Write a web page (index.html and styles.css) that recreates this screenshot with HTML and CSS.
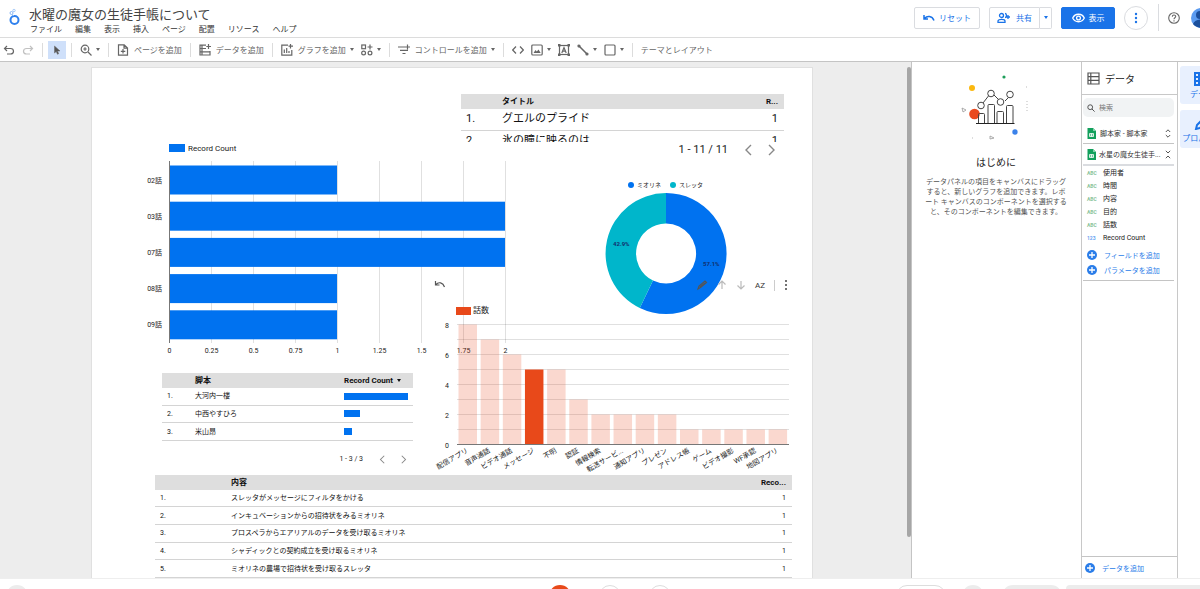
FILE: index.html
```html
<!DOCTYPE html>
<html lang="ja">
<head>
    <meta charset="UTF-8">
    <meta name="viewport" content="width=device-width, initial-scale=1.0">
    <title>水曜の魔女の生徒手帳について</title>
    <link rel="stylesheet" href="styles.css">
</head>
<body>

    <header class="header">
        <svg class="logo" viewBox="0 0 12 18" fill="none" stroke="#2f80ed">
            <circle cx="6.500" cy="12" r="4" stroke-width="2"/>
            <circle cx="3.500" cy="5" r="1.500" stroke="#8ab8f5"/>
            <circle cx="6" cy="2.500" r="1.200" stroke="#a9cbf8"/>
            <path d="M4.500 6.500 6 8" stroke="#8ab8f5"/>
        </svg>
        <div class="heading">
            <h1>水曜の魔女の生徒手帳について</h1>
            <nav class="menu">
                <button>ファイル</button>
                <button>編集</button>
                <button>表示</button>
                <button>挿入</button>
                <button>ページ</button>
                <button>配置</button>
                <button>リソース</button>
                <button>ヘルプ</button>
            </nav>
        </div>
        <div class="actions">
            <button class="btn reset">
                <svg width="12" height="12" viewBox="0 0 12 12" fill="none" stroke="currentColor" stroke-width="1.500"><path d="M1 3v4h4M1.500 6.500C4 3.500 9 3.500 11 8.500"/></svg>
                リセット
            </button>
            <div class="split">
                <button class="btn share">
                    <svg width="13" height="12" viewBox="0 0 13 12" fill="none" stroke="currentColor" stroke-width="1.300"><circle cx="4.500" cy="3.500" r="2"/><path d="M1 10.300V9c0-2.200 7-2.200 7 0v1.300zM8 1.500c2 0 2 4 0 4M11 3v4M9 5h4"/></svg>
                    共有
                </button>
                <button class="btn share-more" aria-label="共有オプション"><span class="caret"></span></button>
            </div>
            <button class="btn primary">
                <svg width="13" height="12" viewBox="0 0 13 12" fill="none" stroke="currentColor" stroke-width="1.300"><path d="M.7 6C3 1 10 1 12.300 6 10 11 3 11 .7 6z"/><circle cx="6.500" cy="6" r="1.900"/></svg>
                表示
            </button>
            <button class="round" aria-label="その他">
                <svg width="12" height="12" viewBox="0 0 12 12" fill="#1a73e8"><circle cx="6" cy="2" r="1.200"/><circle cx="6" cy="6" r="1.200"/><circle cx="6" cy="10" r="1.200"/></svg>
            </button>
            <span class="header-line"></span>
            <button class="help" aria-label="ヘルプ">
                <svg width="12" height="12" viewBox="0 0 12 12" fill="none" stroke="#666" stroke-width="1.100"><circle cx="6" cy="6" r="5.300"/><path d="M4.300 4.800c0-2.300 3.400-2.300 3.400-.2C7.700 5.800 6 5.800 6 7.200M6 8.300v1.200"/></svg>
            </button>
            <button class="avatar" aria-label="アカウント">
                <svg width="20" height="20" viewBox="0 0 20 20"><circle cx="10" cy="10" r="10" fill="#5b9bf0"/><circle cx="9" cy="7" r="4" fill="#1b4f9c"/><path d="M2 16c2-6 14-6 16 0-4 5-12 5-16 0z" fill="#1b4f9c"/></svg>
            </button>
        </div>
    </header>

    <div class="toolbar">
        <button class="tool" aria-label="元に戻す"><svg viewBox="0 0 12 12"><path d="M4 2 1.500 4.500 4 7M2 4.500h5.500c4 0 4 5.500 0 5.500H4"/></svg></button>
        <button class="tool" aria-label="やり直す" disabled><svg viewBox="0 0 12 12"><path d="M8 2l2.500 2.500L8 7M10 4.500H4.500c-4 0-4 5.500 0 5.500H8"/></svg></button>
        <span class="line"></span>
        <button class="tool selected" aria-label="選択"><svg viewBox="0 0 12 12"><path d="M3.500 2v7l1.700-1.500L6.500 10.300l1.200-.6L6.500 7H9z" fill="#555" stroke-width=".5"/></svg></button>
        <span class="line"></span>
        <button class="tool" aria-label="ズーム"><svg viewBox="0 0 12 12"><circle cx="5" cy="5" r="3.800"/><path d="M8 8l3.500 3.500M3.300 5h3.400M5 3.300v3.400"/></svg><span class="caret"></span></button>
        <span class="line"></span>
        <button class="tool"><svg viewBox="0 0 12 12"><path d="M1.500.8h5.700L10.500 4v7.200h-9zM7 1v3.200h3.500M6 5v4.500M3.800 7.300h4.500"/></svg>ページを追加</button>
        <span class="line"></span>
        <button class="tool"><svg viewBox="0 0 12 12"><path d="M7 1.200H1v9.800h10V7M1 4.500h6M1 7.800h10M9.500 0v5M7.300 2.500h4.700M3 1v10"/></svg>データを追加</button>
        <span class="line"></span>
        <button class="tool"><svg viewBox="0 0 12 12"><path d="M7 1.200H.8v10h10V6M3.300 9V5.500M5.700 9V4M8 9V7M9.500 0v4.500M7.500 2.200H12"/></svg>グラフを追加<span class="caret"></span></button>
        <button class="tool" aria-label="コミュニティ ビジュアリゼーション"><svg viewBox="0 0 12 12"><rect x=".8" y="1" width="3.700" height="3.700"/><circle cx="2.600" cy="9" r="1.900"/><circle cx="9" cy="9" r="1.900"/><path d="M9 .5v5M6.500 3h5"/></svg><span class="caret"></span></button>
        <span class="line"></span>
        <button class="tool"><svg viewBox="0 0 12 12"><path d="M0 3h7M2 6.300h8M4.500 9.500h3M9.500.5v5M7 3h5"/></svg>コントロールを追加<span class="caret"></span></button>
        <span class="line"></span>
        <button class="tool" aria-label="URL の埋め込み"><svg viewBox="0 0 12 12"><path d="M4 2.500.7 6 4 9.500M8 2.500 11.300 6 8 9.500"/></svg></button>
        <button class="tool" aria-label="画像"><svg viewBox="0 0 12 12"><rect x=".8" y="1" width="10.400" height="10" rx="1"/><path d="M2.500 9 4.500 6l1.300 1.500L7.500 5.500 9.700 9z" fill="#666" stroke="none"/></svg><span class="caret"></span></button>
        <button class="tool" aria-label="テキスト"><svg viewBox="0 0 12 12"><rect x="1.500" y="1.500" width="9" height="9"/><path d="M3.800 9 6 3.500 8.200 9M4.500 7.200h3"/><path d="M0 0h2.500v2.500H0zM9.500 0H12v2.500H9.500zM0 9.500h2.500V12H0zM9.500 9.500H12V12H9.500z" fill="#666" stroke="none"/></svg></button>
        <button class="tool" aria-label="線"><svg viewBox="0 0 12 12"><path d="M2 2l8 8" stroke-width="1.600"/><circle cx="2" cy="2" r="1" fill="#666"/><circle cx="10" cy="10" r="1" fill="#666"/></svg><span class="caret"></span></button>
        <button class="tool" aria-label="図形"><svg viewBox="0 0 12 12"><rect x="1" y="1" width="10" height="10" rx="1"/></svg><span class="caret"></span></button>
        <span class="line"></span>
        <button class="tool">テーマとレイアウト</button>
    </div>

    <div class="workspace">
        <main class="canvas">
            <div class="sheet">

                <section class="widget titles">
                    <div class="clip">
                        <table class="grid large">
                            <thead><tr><th class="num"></th><th>タイトル</th><th class="count">R...</th></tr></thead>
                            <tbody>
                                <tr><td>1.</td><td>グエルのプライド</td><td class="count">1</td></tr>
                                <tr><td>2.</td><td>氷の瞳に映るのは</td><td class="count">1</td></tr>
                            </tbody>
                        </table>
                    </div>
                    <div class="pager large">
                        <span>1 - 11 / 11</span>
                        <button aria-label="前へ"><svg viewBox="0 0 8 12"><path d="M7 1 2 6l5 5"/></svg></button>
                        <button aria-label="次へ"><svg viewBox="0 0 8 12"><path d="M1 1l5 5-5 5"/></svg></button>
                    </div>
                </section>

                <svg class="widget bars" id="barChart" width="375" height="220" viewBox="142 140 375 220"></svg>
                <svg class="widget donut" width="140" height="142" viewBox="596 176 140 142">
                    <circle cx="631" cy="185" r="3" fill="#0072f0"/>
                    <text x="637" y="187">ミオリネ</text>
                    <circle cx="673" cy="185" r="3" fill="#00b6cb"/>
                    <text x="679" y="187">スレッタ</text>
                    <path d="M666 193A60.500 60.500 0 1 1 639.800 308L653 280.500A30 30 0 1 0 666 223.500z" fill="#0072f0"/>
                    <path d="M666 193A60.500 60.500 0 0 0 639.800 308L653 280.500A30 30 0 0 1 666 223.500z" fill="#00b6cb"/>
                    <text x="613" y="246" class="share-label">42.9%</text>
                    <text x="703" y="266" class="share-label">57.1%</text>
                </svg>
                <svg class="widget columns" id="columnChart" width="364" height="172" viewBox="432 302 364 172"></svg>

                <button class="widget undo-chart" aria-label="元に戻す"><svg width="12" height="10" viewBox="0 0 12 10"><path d="M1.500 1v4h4M2 4.500c2.500-3 7-2 8.500 2.500"/></svg></button>
                <div class="widget chart-tools">
                    <button aria-label="編集"><svg width="12" height="12" viewBox="0 0 12 12"><path d="M2 10l1-3 6-5 1.500 1.500-6 5zM4 8l5-4"/></svg></button>
                    <button class="muted" aria-label="ドリルアップ"><svg width="10" height="12" viewBox="0 0 10 12"><path d="M5 10V2M1.500 5.500 5 2l3.500 3.500"/></svg></button>
                    <button class="muted" aria-label="ドリルダウン"><svg width="10" height="12" viewBox="0 0 10 12"><path d="M5 2v8M1.500 6.500 5 10l3.500-3.500"/></svg></button>
                    <button>AZ</button>
                    <span class="tools-line"></span>
                    <button aria-label="その他"><svg width="4" height="12" viewBox="0 0 4 12" fill="#444"><circle cx="2" cy="2" r="1"/><circle cx="2" cy="6" r="1"/><circle cx="2" cy="10" r="1"/></svg></button>
                </div>

                <section class="widget writers">
                    <table class="grid">
                        <thead><tr><th class="num"></th><th>脚本</th><th class="meter-col">Record Count <span class="caret"></span></th></tr></thead>
                        <tbody>
                            <tr><td>1.</td><td>大河内一楼</td><td><div class="meter" style="width: 100%"></div></td></tr>
                            <tr><td>2.</td><td>中西やすひろ</td><td><div class="meter" style="width: 25%"></div></td></tr>
                            <tr><td>3.</td><td>米山昂</td><td><div class="meter" style="width: 13%"></div></td></tr>
                        </tbody>
                    </table>
                    <div class="pager">
                        <span>1 - 3 / 3</span>
                        <button aria-label="前へ"><svg viewBox="0 0 8 12"><path d="M7 1 2 6l5 5"/></svg></button>
                        <button aria-label="次へ"><svg viewBox="0 0 8 12"><path d="M1 1l5 5-5 5"/></svg></button>
                    </div>
                </section>

                <section class="widget contents">
                    <table class="grid">
                        <thead><tr><th class="num"></th><th>内容</th><th class="count">Reco...</th></tr></thead>
                        <tbody>
                            <tr><td>1.</td><td>スレッタがメッセージにフィルタをかける</td><td class="count">1</td></tr>
                            <tr><td>2.</td><td>インキュベーションからの招待状をみるミオリネ</td><td class="count">1</td></tr>
                            <tr><td>3.</td><td>プロスペラからエアリアルのデータを受け取るミオリネ</td><td class="count">1</td></tr>
                            <tr><td>4.</td><td>シャディックとの契約成立を受け取るミオリネ</td><td class="count">1</td></tr>
                            <tr><td>5.</td><td>ミオリネの農場で招待状を受け取るスレッタ</td><td class="count">1</td></tr>
                        </tbody>
                    </table>
                </section>
            </div>
        </main>
        <div class="scroll"><div class="thumb"></div></div>

        <aside class="intro">
            <svg width="80" height="76" viewBox="0 0 80 76" fill="none" stroke="#444">
                <circle cx="48" cy="6" r="1.600" fill="#1e9e5a" stroke="none"/>
                <circle cx="16" cy="17" r="3" fill="#fbb80f" stroke="none"/>
                <circle cx="59" cy="61" r="2.700" fill="#3b82ea" stroke="none"/>
                <circle cx="18.500" cy="43" r="5.300" fill="#ea4a1f" stroke="none"/>
                <path d="M27 32l7-9M38 24l6 6M49 30l5-5"/>
                <g fill="#fff"><circle cx="25" cy="34.500" r="3.300"/><circle cx="35" cy="22.500" r="3.300"/><circle cx="44.500" cy="31" r="3.300"/><circle cx="54" cy="23.500" r="3.300"/></g>
                <path d="M22.500 52V43.500q0-1 1-1h4q1 0 1 1V52M32 52V34.500q0-1 1-1h4.500q1 0 1 1V52M41 52V41.500q0-1 1-1h4.500q1 0 1 1V52M50.500 52V35.500q0-1 1-1h4.500q1 0 1 1V52"/>
                <path d="M20 52.500h38.500" stroke="#222"/>
                <path d="M6 37l4 2-3 2zM34 65v3l4-1z" stroke="#999" stroke-width=".8"/>
                <path d="M71 30v10M70 16h1M16 67h1" stroke="#bbb" stroke-dasharray="1 2"/>
            </svg>
            <h2>はじめに</h2>
            <p>データパネルの項目をキャンバスにドラッグ<br>すると、新しいグラフを追加できます。レポ<br>ート キャンバスのコンポーネントを選択する<br>と、そのコンポーネントを編集できます。</p>
        </aside>

        <aside class="data">
            <h2 class="data-title">
                <svg width="13" height="13" viewBox="0 0 13 13" fill="none" stroke="#555" stroke-width="1.200"><path d="M1 1h11v11H1zM1 4.700h11M1 8.300h11M3.800 1v11"/></svg>
                データ
            </h2>
            <label class="search">
                <svg width="8" height="8" viewBox="0 0 8 8" fill="none" stroke="#555"><circle cx="3.200" cy="3.200" r="2.400"/><path d="M5 5l2.600 2.600"/></svg>
                <input type="search" placeholder="検索" aria-label="検索">
            </label>
            <button class="source">
                <svg width="9" height="11" viewBox="0 0 9 11"><path d="M.5 0h5.500L9 3v8H.5z" fill="#12a05c"/><path d="M6 0v3h3z" fill="#7fd0a8"/><path d="M2.500 5.500h4v3h-4zM4.500 5.500v3M2.500 7h4" fill="none" stroke="#fff" stroke-width=".8"/></svg>
                <span>脚本家 - 脚本家</span>
                <svg width="6" height="9" viewBox="0 0 6 9" fill="none" stroke="#555"><path d="M.8 3 3 .8 5.200 3M.8 6 3 8.200 5.200 6"/></svg>
            </button>
            <button class="source open">
                <svg width="9" height="11" viewBox="0 0 9 11"><path d="M.5 0h5.500L9 3v8H.5z" fill="#12a05c"/><path d="M6 0v3h3z" fill="#7fd0a8"/><path d="M2.500 5.500h4v3h-4zM4.500 5.500v3M2.500 7h4" fill="none" stroke="#fff" stroke-width=".8"/></svg>
                <span>水星の魔女生徒手...</span>
                <svg width="6" height="9" viewBox="0 0 6 9" fill="none" stroke="#555"><path d="M.8.800 3 3 5.200.8M.8 8.200 3 6l2.200 2.200"/></svg>
            </button>
            <ul class="fields">
                <li><b>ABC</b>使用者</li>
                <li><b>ABC</b>時間</li>
                <li><b>ABC</b>内容</li>
                <li><b>ABC</b>目的</li>
                <li><b>ABC</b>話数</li>
                <li class="metric"><b>123</b>Record Count</li>
            </ul>
            <div class="adders">
                <button class="add"><svg width="10" height="10" viewBox="0 0 10 10"><circle cx="5" cy="5" r="5" fill="#2a7de9"/><path d="M5 2v6M2 5h6" stroke="#fff" stroke-width="1.300"/></svg>フィールドを追加</button>
                <button class="add"><svg width="10" height="10" viewBox="0 0 10 10"><circle cx="5" cy="5" r="5" fill="#2a7de9"/><path d="M5 2v6M2 5h6" stroke="#fff" stroke-width="1.300"/></svg>パラメータを追加</button>
            </div>
            <div class="data-bottom">
                <button class="add"><svg width="10" height="10" viewBox="0 0 10 10"><circle cx="5" cy="5" r="5" fill="#2a7de9"/><path d="M5 2v6M2 5h6" stroke="#fff" stroke-width="1.300"/></svg>データを追加</button>
            </div>
        </aside>

        <nav class="rail">
            <button><svg width="16" height="14" viewBox="0 0 16 14"><path d="M1 1h14v12H1zM1 5h14M1 9h14M5 1v12"/></svg>データ</button>
            <button><svg width="16" height="14" viewBox="0 0 16 14"><path d="M2 13l1-4 8-8 3 3-8 8z"/></svg>プロパティ</button>
        </nav>
    </div>

    <footer class="dock">
        <div class="dock-left"><i class="disc"></i></div>
        <div class="dock-center"><i class="disc hot"></i><i class="disc ring"></i><i class="disc ring"></i></div>
        <div class="dock-right"><i class="disc pill"></i><i class="disc"></i><i class="disc wide"></i><i class="disc rest"></i></div>
    </footer>

    <script>
        const SVG = "http://www.w3.org/2000/svg";

        function add(parent, tag, attrs, text) {
            const el = document.createElementNS(SVG, tag);
            for (const key in attrs) el.setAttribute(key, attrs[key]);
            if (text !== undefined) el.textContent = text;
            parent.appendChild(el);
        }

        // Record Count per episode
        const episodes = [["02話", 1], ["03話", 2], ["07話", 2], ["08話", 1], ["09話", 1]];

        function drawBars() {
            const svg = document.getElementById("barChart");
            const unit = 168;
            add(svg, "rect", { x: 169, y: 144, width: 16, height: 8, fill: "#0072f0" });
            add(svg, "text", { x: 188, y: 151, class: "legend" }, "Record Count");
            for (let i = 0; i <= 8; i++) {
                const x = 169.5 + i * unit / 4;
                add(svg, "line", { x1: x, x2: x, y1: 161, y2: 343, class: i ? "guide" : "axis" });
                add(svg, "text", { x: x, y: 353, class: "middle" }, i / 4);
            }
            episodes.forEach(([name, count], i) => {
                const y = 165.5 + i * 36.2;
                add(svg, "rect", { x: 170, y: y, width: count * unit - 1, height: 29, fill: "#0072f0" });
                add(svg, "text", { x: 162, y: y + 17, class: "end" }, name);
            });
        }

        // 話数 per kind of scene
        const kinds = [
            ["配信アプリ", 8], ["音声通話", 7], ["ビデオ通話", 6], ["メッセージ", 5], ["不明", 5],
            ["認証", 3], ["情報検索", 2], ["転送サービ...", 2], ["通知アプリ", 2], ["プレゼン", 2],
            ["アドレス帳", 1], ["ゲーム", 1], ["ビデオ撮影", 1], ["WF承認", 1], ["地図アプリ", 1],
        ];

        function drawColumns() {
            const svg = document.getElementById("columnChart");
            const base = 444.5;
            add(svg, "rect", { x: 456, y: 307, width: 15, height: 8, fill: "#e8491a" });
            add(svg, "text", { x: 473, y: 313, class: "legend" }, "話数");
            for (let i = 0; i <= 8; i++) {
                const y = base - i * 15;
                if (i) add(svg, "line", { x1: 457, x2: 789, y1: y, y2: y, class: "guide" });
                if (i % 2 === 0) add(svg, "text", { x: 449, y: y + 3, class: "end" }, i);
            }
            kinds.forEach(([name, count], i) => {
                const x = 458.5 + i * 22.15;
                add(svg, "rect", {
                    x: x, y: base - count * 15, width: 18.5, height: count * 15,
                    fill: "#e8491a", "fill-opacity": name === "メッセージ" ? 1 : 0.21
                });
                add(svg, "text", { transform: `translate(${x + 10} 452) rotate(-30)`, class: "end" }, name);
            });
            add(svg, "line", { x1: 457, x2: 789, y1: base, y2: base, class: "axis" });
        }

        drawBars();
        drawColumns();
    </script>
</body>
</html>
```
FILE: styles.css
```css
* {
    box-sizing: border-box;
}
body {
    margin: 0;
    height: 100vh;
    display: flex;
    flex-direction: column;
    overflow: hidden;
    background: #fff;
    color: #333;
    font-family: Roboto, "Noto Sans CJK JP", sans-serif;
    font-size: 8px;
}
button, input {
    font: inherit;
    color: inherit;
    background: none;
    border: 0;
    padding: 0;
}
button {
    display: flex;
    align-items: center;
    white-space: nowrap;
}
h1, h2, p, ul {
    margin: 0;
    padding: 0;
    font-weight: 400;
}
svg {
    flex: none;
    display: block;
}

/* header */
.header {
    flex: none;
    display: flex;
    height: 38px;
    border-bottom: 1px solid #dcdcdc;
}
.logo {
    width: 12px;
    height: 18px;
    margin: 8px 9px 0 8px;
}
.heading h1 {
    padding-top: 6px;
    font-size: 13px;
    line-height: 18px;
    color: #444;
}
.menu {
    display: flex;
    gap: 13px;
    padding-left: 1px;
    line-height: 12px;
}
.actions {
    display: flex;
    align-items: center;
    gap: 9px;
    height: 35px;
    margin-left: auto;
    margin-right: -11px;
}
.btn {
    height: 22px;
    justify-content: center;
    gap: 4px;
    border: 1px solid #dadce0;
    border-radius: 2px;
    color: #1a73e8;
}
.reset {
    width: 66px;
}
.split {
    display: flex;
}
.share {
    width: 51px;
    gap: 6px;
    border-radius: 2px 0 0 2px;
}
.share-more {
    width: 12px;
    border-left: 0;
    border-radius: 0 2px 2px 0;
}
.primary {
    width: 54px;
    background: #1a73e8;
    border-color: #1a73e8;
    color: #fff;
}
.round {
    width: 24px;
    height: 24px;
    justify-content: center;
    border: 1px solid #dadce0;
    border-radius: 50%;
}
.header-line {
    width: 1px;
    height: 27px;
    margin-left: 1px;
    background: #dadce0;
}
.help {
    padding-right: 2px;
}
.caret {
    display: inline-block;
    border: 2px solid transparent;
    border-top: 3px solid currentColor;
    border-bottom: 0;
    vertical-align: middle;
}

/* toolbar */
.toolbar {
    flex: none;
    display: flex;
    align-items: center;
    gap: 7px;
    height: 24px;
    padding-left: 3px;
    border-bottom: 1px solid #c4c4c4;
    color: #666;
}
.tool {
    gap: 5px;
}
.tool .caret {
    margin-left: -1px;
}
.tool svg {
    width: 12px;
    height: 12px;
    fill: none;
    stroke: #666;
    stroke-width: 1.2;
}
.tool:disabled {
    opacity: .4;
}
.selected {
    height: 18px;
    margin: 0 -3px;
    padding: 0 3px;
    background: #cfe0fa;
}
.line {
    width: 1px;
    height: 14px;
    margin: 0 1px;
    background: #dcdcdc;
}

/* report canvas */
.workspace {
    flex: 1;
    min-height: 0;
    display: flex;
}
.canvas {
    flex: 1;
    min-width: 0;
    padding: 6px 3px 0 0;
    overflow: hidden;
    background: #ededed;
}
.sheet {
    position: relative;
    width: 720px;
    height: 100%;
    margin: 0 auto;
    overflow: hidden;
    background: #fff;
    box-shadow: 0 0 0 1px #e0e0e0;
}
.scroll {
    width: 4px;
    padding-top: 5px;
    background: #ededed;
}
.thumb {
    height: 92%;
    background: #a6a6a6;
    border-radius: 2px;
}
.widget {
    position: absolute;
}
.titles {
    left: 369px;
    top: 26px;
    width: 323px;
}
.clip {
    height: 48px;
    overflow: hidden;
}
.bars {
    left: 50px;
    top: 72px;
}
.donut {
    left: 504px;
    top: 108px;
}
.columns {
    left: 340px;
    top: 234px;
}
.undo-chart {
    left: 342px;
    top: 212px;
}
.chart-tools {
    left: 604px;
    top: 210px;
}
.writers {
    left: 70px;
    top: 305px;
    width: 251px;
}
.contents {
    left: 63px;
    top: 407px;
    width: 637px;
}
.widget text {
    font-size: 7px;
    fill: #222;
}
.widget .legend {
    font-size: 8px;
}
.donut text {
    font-size: 6px;
}
.donut .share-label {
    font-weight: 700;
    fill: #12306e;
}
.middle {
    text-anchor: middle;
}
.end {
    text-anchor: end;
}
.guide {
    stroke: #000;
    stroke-opacity: .12;
}
.axis {
    stroke: #777;
}
.undo-chart path,
.chart-tools path {
    fill: none;
    stroke: #555;
    stroke-width: 1.2;
}
.chart-tools {
    display: flex;
    align-items: center;
    gap: 9px;
    height: 14px;
}
.chart-tools .muted path {
    stroke: #bbb;
}
.tools-line {
    width: 1px;
    height: 11px;
    background: #ccc;
}

/* tables */
.grid {
    width: 100%;
    border-collapse: collapse;
    table-layout: fixed;
    color: #111;
    font-size: 7px;
    line-height: 12px;
}
.grid th {
    height: 15px;
    padding: 0;
    background: #dedede;
    font-size: 8px;
    text-align: left;
}
.grid td {
    padding: 0 0 0 5px;
    border-bottom: 1px solid #d4d4d4;
}
.grid td:nth-child(2),
.grid td:nth-child(3) {
    padding-left: 0;
}
.grid.large td {
    height: 21px;
    font-size: 11px;
    line-height: 18px;
}
.grid .num {
    width: 41px;
}
.writers .num {
    width: 33px;
}
.contents .num {
    width: 76px;
}
.grid .count {
    width: 60px;
    padding-right: 6px;
    text-align: right;
}
.grid .meter-col {
    width: 69px;
    white-space: nowrap;
}
.meter-col .caret {
    margin-left: 2px;
}
.writers .grid {
    height: 68px;
}
.writers td:nth-child(3) {
    padding-right: 5px;
}
.contents .grid {
    height: 103px;
}
.meter {
    height: 7px;
    background: #0072f0;
}
.pager {
    display: flex;
    align-items: center;
    justify-content: flex-end;
    gap: 16px;
    padding: 12px 6px 0 0;
    font-size: 7px;
    line-height: 12px;
    color: #222;
}
.pager.large {
    padding: 0 8px 0 0;
    font-size: 11px;
    line-height: 15px;
}
.pager svg {
    width: 6px;
    height: 9px;
    fill: none;
    stroke: #888;
    stroke-width: 1.4;
}
.pager.large svg {
    width: 8px;
    height: 12px;
}

/* intro panel */
.intro {
    width: 170px;
    display: flex;
    flex-direction: column;
    align-items: center;
    padding: 9px 1px 0 0;
    border-left: 1px solid #c4c4c4;
    text-align: center;
}
.intro h2 {
    padding: 8px 0 7px;
    font-size: 10px;
    line-height: 15px;
    color: #222;
}
.intro p {
    font-size: 7px;
    line-height: 10px;
    color: #555;
    white-space: nowrap;
}

/* data panel */
.data {
    width: 96px;
    display: flex;
    flex-direction: column;
    border-left: 1px solid #c8c8c8;
    font-size: 7px;
}
.data-title {
    display: flex;
    align-items: center;
    gap: 5px;
    height: 33px;
    padding-left: 5px;
    border-bottom: 1px solid #c8c8c8;
    font-size: 10px;
    color: #222;
}
.search {
    display: flex;
    align-items: center;
    gap: 4px;
    height: 19px;
    margin: 3px 3px 6px 1px;
    padding-left: 4px;
    background: #f1f3f4;
    border-radius: 5px;
}
.search input {
    width: 60px;
}
.search input::placeholder {
    color: #777;
}
.source {
    gap: 4px;
    height: 21px;
    margin: 0 3px 0 1px;
    padding: 0 3px 0 4px;
    border-bottom: 1px solid #c4c4c4;
}
.source span {
    flex: 1;
    text-align: left;
}
.source.open {
    gap: 3px;
    height: 22px;
    border-bottom: 2px solid #dadce0;
}
.fields {
    padding: 1px 0 0 5px;
    list-style: none;
    line-height: 13px;
    color: #222;
}
.fields li {
    display: flex;
    align-items: center;
    gap: 5px;
    height: 13px;
}
.fields b {
    width: 11px;
    font-size: 5px;
    color: #8cc49c;
}
.fields .metric b {
    color: #6ba5f2;
}
.adders {
    margin: 2px 3px 0 1px;
    padding: 0 0 3px 4px;
    border-bottom: 1px solid #c4c4c4;
}
.add {
    gap: 7px;
    height: 15px;
    color: #2a7de9;
}
.data-bottom {
    margin-top: auto;
    padding: 3px;
    border-top: 1px solid #c4c4c4;
}

/* right rail */
.rail {
    width: 23px;
    padding: 4px 0 0 2px;
    overflow: hidden;
    border-left: 1px solid #c8c8c8;
}
.rail button {
    flex-direction: column;
    justify-content: center;
    gap: 2px;
    width: 44px;
    height: 38px;
    margin-bottom: 6px;
    background: #e8f0fe;
    border-radius: 3px;
    color: #1a73e8;
}
.rail path {
    fill: none;
    stroke: #1a73e8;
    stroke-width: 2;
}

/* bottom dock */
.dock {
    flex: none;
    display: grid;
    grid-template-columns: 1fr auto 1fr;
    height: 11px;
    overflow: hidden;
    border-top: 1px solid #eee;
    background: #fff;
}
.dock-left, .dock-center, .dock-right {
    display: flex;
    padding-top: 6px;
}
.dock-left {
    padding-left: 6px;
}
.dock-center {
    gap: 28px;
    padding-left: 20px;
}
.dock-right {
    justify-content: flex-end;
    gap: 4px;
}
.disc {
    width: 22px;
    height: 22px;
    border-radius: 11px;
    background: #ececec;
}
.hot {
    background: #e8491a;
}
.ring {
    background: #fff;
    border: 1px solid #ddd;
}
.pill {
    width: 50px;
    margin-right: 12px;
    background: #fff;
    border: 1px solid #ddd;
}
.wide {
    width: 60px;
    margin-left: 14px;
}
.rest {
    width: 134px;
    border-radius: 4px 0 0 4px;
}
```
